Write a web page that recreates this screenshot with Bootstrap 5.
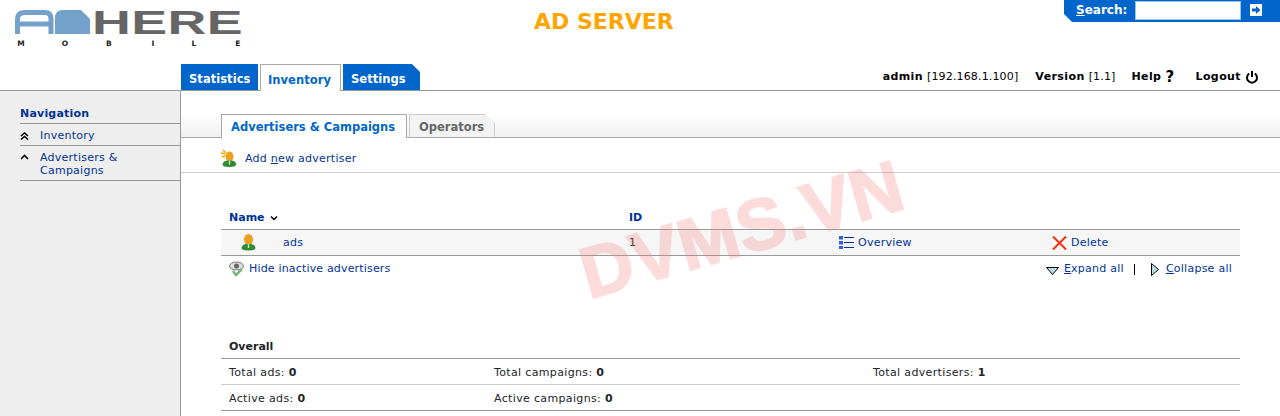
<!DOCTYPE html>
<html lang="en">
<head>
<meta charset="utf-8">
<title>Ad Server</title>
<link href="https://cdn.jsdelivr.net/npm/bootstrap@5.3.0/dist/css/bootstrap.min.css" rel="stylesheet">
<style>
html,body{height:416px;overflow:hidden}
body{font-family:"DejaVu Sans",Verdana,sans-serif;font-size:11px;line-height:14px;letter-spacing:.25px;color:#000;background:#fff;position:relative}
a{color:#003399;text-decoration:none}
.u{text-decoration:underline}
.top-h{height:91px;border-bottom:1px solid #999;position:relative}
.logo-wrap{padding:10px 0 0 15px;width:260px;flex:none}
.site-title{position:absolute;left:534px;top:9px;font-size:22px;line-height:26px;font-weight:700;color:#ffa500;font-family:"DejaVu Sans",sans-serif;letter-spacing:0}
.search-box{position:absolute;right:0;top:0;width:216px;height:22px;background:#0066cc;clip-path:polygon(0 0,100% 0,100% 100%,8px 100%,0 14px);color:#fff;font-weight:700;font-size:12px;padding:1px 0 0 12px;display:flex;align-items:flex-start;letter-spacing:0}
.search-box label{line-height:19px;width:59px}
.search-input{width:106px;height:19px;border:1px solid #9cc3ee;background:#fff;padding:0}
.search-go{margin:3px 0 0 9px;display:block}
.menu-row{position:absolute;left:181px;bottom:0;display:flex;gap:2px;align-items:flex-end}
.menu-tab{display:block;height:26px;font-size:11.5px;font-weight:700;line-height:31px;padding:0 8px;color:#fff;background:#0066cc;letter-spacing:.05px;width:77px}
.menu-tab.on{background:#fff;color:#0066cc;border:1px solid #aaa;border-bottom:0;width:81px;height:27px;margin-bottom:-1px;line-height:30px;padding:0 7px}
.menu-tab.last{clip-path:polygon(0 0,69px 0,100% 8px,100% 100%,0 100%)}
.user-row{position:absolute;right:21px;bottom:6px;display:flex;align-items:center}
.user-row b{font-weight:700;letter-spacing:.4px}
.user-row span{letter-spacing:.15px}
.frame{display:flex;height:325px}
.side{width:181px;flex:none;background:#eee;border-right:1px solid #999;padding:16px 0 0 20px}
.side-h{color:#003399;font-weight:700;font-size:11px;line-height:14px;padding-bottom:2px;border-bottom:1px solid #999;letter-spacing:.2px}
.side-i{border-bottom:1px solid #999;display:flex;padding:5px 0 3px;line-height:13px}
.side-i .g{width:20px;flex:none;padding-top:3px;line-height:0}
.side-i a{display:block}
.main{flex:1;min-width:0;position:relative}
.sub-bar{height:47px;border-bottom:1px solid #aaa;background:linear-gradient(#fff 45%,#f1f1f1);padding:23px 0 0 40px;display:flex;gap:2px;align-items:flex-start}
.sub-tab{display:block;height:24px;font-size:11.5px;font-weight:700;line-height:25px;letter-spacing:0}
.sub-tab.on{width:186px;background:#fff;color:#0066cc;border:1px solid #aaa;border-bottom:0;padding-left:9px}
.sub-tab.off{width:86px;height:23px;background:#f3f3f3;color:#666;border:1px solid #ccc;border-bottom:0;padding-left:9px;clip-path:polygon(0 0,76px 0,100% 9px,100% 100%,0 100%)}
.act-bar{height:35px;border-bottom:1px solid #ccc;padding:12px 0 0 40px;display:flex;align-items:flex-start}
.act-bar a{margin-left:9px;margin-top:2px}
.pane{padding:0 40px}
.data-t{width:100%;margin:0;table-layout:fixed;border-collapse:collapse}
.data-t td,.data-t th{padding:0 8px;background:transparent;box-shadow:none;border:0;font-size:11px;color:inherit;vertical-align:middle}
.list-t{margin-top:37px}
.data-t.list-t th{height:19px;color:#003399;font-weight:700;border-bottom:1px solid #999;padding-bottom:2px;letter-spacing:0}
.data-t.list-t td{height:26px;background:#f6f6f6;border-bottom:1px solid #999;padding-top:1px}
.list-foot{display:flex;justify-content:space-between;padding:2px 8px 0;height:25px;align-items:center}
.foot-links{display:flex;align-items:center}
.foot-sep{display:block;width:1px;height:11px;background:#000;margin:0 16px 0 10px}
.hide-link{letter-spacing:.17px;margin-left:4px}
.ico{vertical-align:middle}
.data-t.sum-t{margin-top:50px}
.data-t.sum-t th{height:28px;font-weight:700;border-bottom:1px solid #999;padding-top:5px;letter-spacing:0}
.data-t.sum-t td{height:26px;border-bottom:1px solid #ccc;padding-top:2px;letter-spacing:.35px}
.data-t.sum-t tr:last-child td{border-bottom-color:#999}
.wm{position:absolute;left:582px;top:240px;font-family:"Liberation Sans",Arial,sans-serif;font-weight:700;font-size:72px;line-height:70px;color:#f47878;-webkit-text-stroke:2px #f47878;opacity:.26;transform:rotate(-16deg);transform-origin:left center;white-space:nowrap;pointer-events:none;letter-spacing:.6px}
</style>
</head>
<body>
<header class="top-h">
  <div class="logo-wrap">
    <svg width="235" height="40" viewBox="15 10 235 40" role="img" aria-label="AdHere Mobile">
      <path d="M17.500 34V19Q17.500 12.500 25 12.500H45Q51 12.500 51 19V34M17 24H51" fill="none" stroke="#74a0cc" stroke-width="5"/>
      <path d="M55 34V18Q55 10 63 10H81L90 19V34Z" fill="#74a0cc"/>
      <text x="92" y="33.500" font-family="Liberation Sans" font-weight="700" font-size="33" fill="#666" textLength="151" lengthAdjust="spacingAndGlyphs">HERE</text>
      <g font-family="DejaVu Sans" font-size="7.500" font-weight="700" fill="#222" text-anchor="middle">
        <text x="21" y="46">M</text><text x="65" y="46">O</text><text x="109" y="46">B</text><text x="153" y="46">I</text><text x="194" y="46">L</text><text x="238" y="46">E</text>
      </g>
    </svg>
  </div>
  <div class="site-title">AD SERVER</div>
  <form class="search-box">
    <label><span class="u">S</span>earch:</label>
    <input class="search-input" type="text" aria-label="Search">
    <svg class="search-go" width="12" height="12" viewBox="0 0 12 12"><rect width="12" height="12" fill="#fff"/><path d="M2 4.500H6V2L10.500 6 6 10V7.500H2Z" fill="#0066cc"/></svg>
  </form>
  <nav class="menu-row">
    <a class="menu-tab" href="#">Statistics</a>
    <a class="menu-tab on" href="#">Inventory</a>
    <a class="menu-tab last" href="#">Settings</a>
  </nav>
  <div class="user-row">
    <b>admin</b><span class="ms-1">[192.168.1.100]</span>
    <b style="margin-left:17px">Version</b><span class="ms-1">[1.1]</span>
    <b style="margin-left:16px">Help</b>
    <b class="ms-1" style="font-size:15px">?</b>
    <b style="margin-left:21px">Logout</b>
    <svg class="ms-1" width="14" height="14" viewBox="0 0 14 14"><path d="M4.200 3.500A5 5 0 1 0 9.800 3.500" fill="none" stroke="#000" stroke-width="2"/><path d="M7 1V7" stroke="#000" stroke-width="2"/></svg>
  </div>
</header>
<div class="frame">
  <aside class="side">
    <div class="side-h">Navigation</div>
    <div class="side-i"><span class="g"><svg width="9" height="8" viewBox="0 0 9 8"><path d="M1 4L4.500 1 8 4M1 7.500L4.500 4.500 8 7.500" fill="none" stroke="#000" stroke-width="1.600"/></svg></span><a href="#">Inventory</a></div>
    <div class="side-i"><span class="g"><svg width="9" height="6" viewBox="0 0 9 6"><path d="M1 5L4.500 1.500 8 5" fill="none" stroke="#000" stroke-width="1.600"/></svg></span><a href="#">Advertisers &amp;<br>Campaigns</a></div>
  </aside>
  <main class="main">
    <div class="sub-bar">
      <a class="sub-tab on" href="#">Advertisers &amp; Campaigns</a>
      <a class="sub-tab off" href="#">Operators</a>
    </div>
    <div class="act-bar">
      <svg width="15" height="17" viewBox="0 0 15 17"><path d="M0 3L4 4M1 7L4 6M2 0L5 3" stroke="#e5a800" stroke-width="1.500"/><ellipse cx="8.500" cy="6.500" rx="4" ry="5" fill="#f0a020"/><path d="M1.500 14.500Q2 11 6 10.500H11Q15 11 15 14.500Q15 17 8 17Q1.500 17 1.500 14.500Z" fill="#2e8b35"/><path d="M7.800 10.500H9.200V14.500H7.800Z" fill="#dfe8b0"/></svg>
      <a href="#">Add <span class="u">n</span>ew advertiser</a>
    </div>
    <div class="pane">
      <table class="table data-t list-t">
        <colgroup><col style="width:400px"><col style="width:210px"><col style="width:213px"><col></colgroup>
        <thead><tr>
          <th>Name <svg width="8" height="6" viewBox="0 0 8 6" style="margin-left:2px"><path d="M1 1.500L4 4.500 7 1.500" fill="none" stroke="#000" stroke-width="1.500"/></svg></th>
          <th>ID</th><th></th><th></th>
        </tr></thead>
        <tbody><tr>
          <td><span class="d-flex align-items-center"><svg style="margin-left:12px" width="15" height="17" viewBox="0 0 15 17"><ellipse cx="7.500" cy="5.500" rx="4.500" ry="5.500" fill="#f0a020"/><path d="M.5 14Q1 10.500 5 10H10Q14 10.500 14.500 14Q14.500 16.500 7.500 16.500Q.5 16.500 .5 14Z" fill="#2e8b35"/><path d="M6.800 10H8.200V14H6.800Z" fill="#dfe8b0"/></svg><a href="#" style="margin-left:27px">ads</a></span></td>
          <td>1</td>
          <td><svg class="ico me-1" width="15" height="13" viewBox="0 0 15 13"><path d="M0 0H4V3.500H0ZM0 5H4V8.500H0ZM0 10H4V13H0Z" fill="#3060e0"/><path d="M5 1.500H15M5 6.500H15M5 11.500H15" stroke="#003399"/></svg><a href="#">Overview</a></td>
          <td><svg class="ico me-1" width="15" height="14" viewBox="0 0 15 14"><path d="M1 .5L14 13.500M14 .5L1 13.500" stroke="#f03010" stroke-width="2"/></svg><a href="#">Delete</a></td>
        </tr></tbody>
      </table>
      <div class="list-foot">
        <span class="foot-links">
          <svg width="16" height="16" viewBox="0 0 16 16"><ellipse cx="7.500" cy="5" rx="7" ry="4" fill="#ddd" stroke="#777"/><circle cx="7.500" cy="5" r="2.500" fill="#666"/><path d="M4 10L7 14 13 8" fill="none" stroke="#7cb87c" stroke-width="2.500"/></svg>
          <a class="hide-link" href="#">Hide inactive advertisers</a>
        </span>
        <span class="foot-links">
          <svg width="13" height="8" viewBox="0 0 13 8" style="margin-top:3px"><path d="M.5.5H12.500L6.500 7.500Z" fill="#bcdde6" stroke="#000"/></svg>
          <a href="#" style="margin-left:5px"><span class="u">E</span>xpand all</a>
          <span class="foot-sep"></span>
          <svg width="8" height="13" viewBox="0 0 8 13"><path d="M.5.5V12.500L7.500 6.500Z" fill="#bcdde6" stroke="#000"/></svg>
          <a href="#" style="margin-left:7px"><span class="u">C</span>ollapse all</a>
        </span>
      </div>
      <table class="table data-t sum-t">
        <colgroup><col style="width:265px"><col style="width:379px"><col></colgroup>
        <thead><tr><th colspan="3">Overall</th></tr></thead>
        <tbody>
          <tr><td>Total ads: <b>0</b></td><td>Total campaigns: <b>0</b></td><td>Total advertisers: <b>1</b></td></tr>
          <tr><td>Active ads: <b>0</b></td><td>Active campaigns: <b>0</b></td><td></td></tr>
        </tbody>
      </table>
    </div>
  </main>
</div>
<div class="wm">DVMS.VN</div>
</body>
</html>
